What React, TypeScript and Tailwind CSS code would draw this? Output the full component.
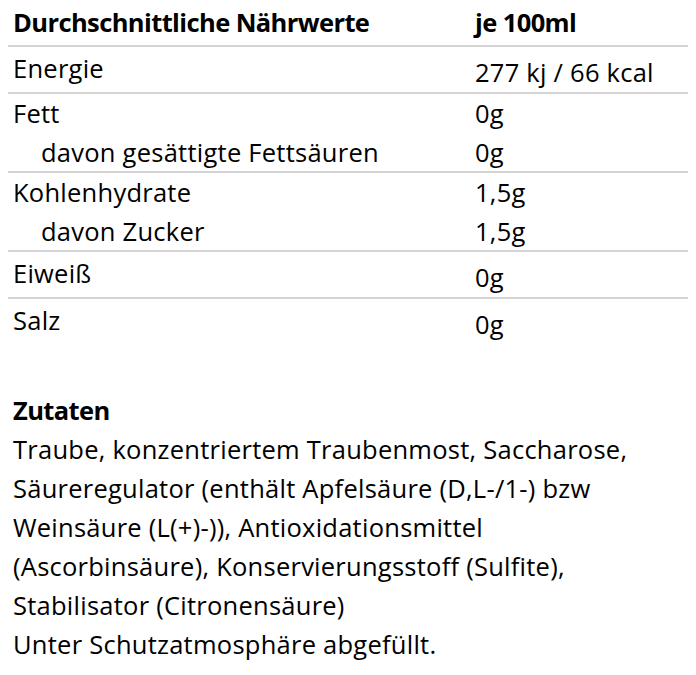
const rows: { lines: { label: string; value: string; indent?: boolean }[]; single?: boolean; last?: boolean }[] = [
  { lines: [{ label: "Energie", value: "277 kj / 66 kcal" }], single: true },
  {
    lines: [
      { label: "Fett", value: "0g" },
      { label: "davon gesättigte Fettsäuren", value: "0g", indent: true },
    ],
  },
  {
    lines: [
      { label: "Kohlenhydrate", value: "1,5g" },
      { label: "davon Zucker", value: "1,5g", indent: true },
    ],
  },
  { lines: [{ label: "Eiweiß", value: "0g" }], single: true },
  { lines: [{ label: "Salz", value: "0g" }], single: true, last: true },
];

export default function App() {
  return (
    <div className="min-h-screen bg-white text-black font-['Open_Sans',sans-serif] text-[25.5px] leading-[39px] tracking-[0.25px]">
      <div className="px-[8px]">
        <div className="grid grid-cols-[462px_1fr] h-[47px] border-b-2 border-[#d4d4d4] font-bold tracking-[-0.6px]">
          <div className="pl-[5px] pt-[3px]">Durchschnittliche Nährwerte</div>
          <div className="pl-[5px] pt-[3px]">je 100ml</div>
        </div>
        {rows.map((row, i) => (
          <div
            key={i}
            className={
              row.last
                ? "grid grid-cols-[462px_1fr] pt-[2px]"
                : row.single
                  ? "grid grid-cols-[462px_1fr] h-[47px] border-b-2 border-[#d4d4d4] pt-[2px]"
                  : "grid grid-cols-[462px_1fr] h-[79px] border-b-2 border-[#d4d4d4]"
            }
          >
            <div className="pl-[5px]">
              {row.lines.map((l) => (
                <div key={l.label} className={l.indent ? "pl-[28px]" : ""}>
                  {l.label}
                </div>
              ))}
            </div>
            <div className={row.single ? "pl-[5px] pt-[4px]" : "pl-[5px]"}>
              {row.lines.map((l) => (
                <div key={l.label}>{l.value}</div>
              ))}
            </div>
          </div>
        ))}
      </div>
      <div className="px-[13px] pt-[47px]">
        <div className="font-bold tracking-[-0.6px]">Zutaten</div>
        <p className="w-[670px]">
          Traube, konzentriertem Traubenmost, Saccharose,
          <br />
          Säureregulator (enthält Apfelsäure (D,L-/1-) bzw
          <br />
          Weinsäure (L(+)-)), Antioxidationsmittel
          <br />
          (Ascorbinsäure), Konservierungsstoff (Sulfite),
          <br />
          Stabilisator (Citronensäure)
          <br />
          Unter Schutzatmosphäre abgefüllt.
        </p>
      </div>
    </div>
  );
}
